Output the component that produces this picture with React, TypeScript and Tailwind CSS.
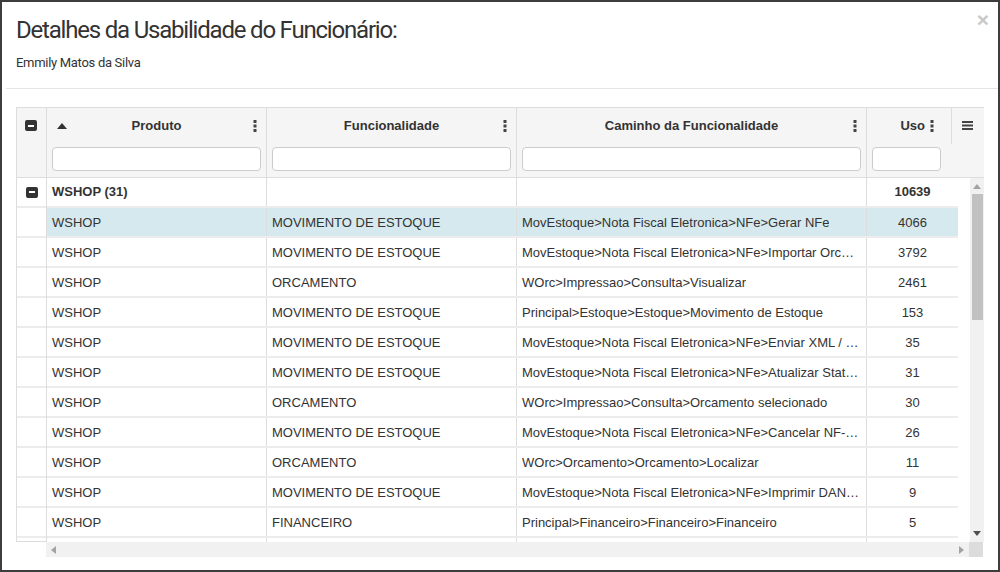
import React from "react";

const rows = [
  { p: "WSHOP", f: "MOVIMENTO DE ESTOQUE", c: "MovEstoque>Nota Fiscal Eletronica>NFe>Gerar NFe", u: "4066", sel: true },
  { p: "WSHOP", f: "MOVIMENTO DE ESTOQUE", c: "MovEstoque>Nota Fiscal Eletronica>NFe>Importar Orcamento", u: "3792" },
  { p: "WSHOP", f: "ORCAMENTO", c: "WOrc>Impressao>Consulta>Visualizar", u: "2461" },
  { p: "WSHOP", f: "MOVIMENTO DE ESTOQUE", c: "Principal>Estoque>Estoque>Movimento de Estoque", u: "153" },
  { p: "WSHOP", f: "MOVIMENTO DE ESTOQUE", c: "MovEstoque>Nota Fiscal Eletronica>NFe>Enviar XML / DANFE", u: "35" },
  { p: "WSHOP", f: "MOVIMENTO DE ESTOQUE", c: "MovEstoque>Nota Fiscal Eletronica>NFe>Atualizar Status da NFe", u: "31" },
  { p: "WSHOP", f: "ORCAMENTO", c: "WOrc>Impressao>Consulta>Orcamento selecionado", u: "30" },
  { p: "WSHOP", f: "MOVIMENTO DE ESTOQUE", c: "MovEstoque>Nota Fiscal Eletronica>NFe>Cancelar NF-e / Inutilizar", u: "26" },
  { p: "WSHOP", f: "ORCAMENTO", c: "WOrc>Orcamento>Orcamento>Localizar", u: "11" },
  { p: "WSHOP", f: "MOVIMENTO DE ESTOQUE", c: "MovEstoque>Nota Fiscal Eletronica>NFe>Imprimir DANFE", u: "9" },
  { p: "WSHOP", f: "FINANCEIRO", c: "Principal>Financeiro>Financeiro>Financeiro", u: "5" },
  { p: "WSHOP", f: "FINANCEIRO", c: "Principal>Financeiro>Financeiro>Contas", u: "4" },
];

function Kebab() {
  return (
    <svg width="4" height="12" viewBox="0 0 4 12" className="shrink-0">
      <rect x="0.5" y="0" width="3" height="3" fill="#444" />
      <rect x="0.5" y="4.5" width="3" height="3" fill="#444" />
      <rect x="0.5" y="9" width="3" height="3" fill="#444" />
    </svg>
  );
}

function MinusBox() {
  return (
    <span className="flex h-[11px] w-[12px] items-center justify-center rounded-[2px] bg-[#333]">
      <span className="h-[2px] w-[6px] bg-white" />
    </span>
  );
}

function HeadCell({ label, w, sort }: { label: string; w: string; sort?: boolean }) {
  return (
    <div className={`${w} flex shrink-0 flex-col border-r border-[#dddddd]`}>
      <div className="grid h-[36px] grid-cols-[24px_1fr_24px] items-center px-[6px]">
        <span className="pl-[4px]">
          {sort && (
            <svg width="10" height="6" viewBox="0 0 10 6"><path d="M0 6 L5 0 L10 6 Z" fill="#333" /></svg>
          )}
        </span>
        <span className="text-center text-[13px] font-bold text-[#333]">{label}</span>
        <span className="flex justify-end pr-[3px]"><Kebab /></span>
      </div>
      <div className="h-[33px] px-[5px] pt-[3px]">
        <div className="h-[24px] rounded-[4px] border border-[#cccccc] bg-white" />
      </div>
    </div>
  );
}

export default function App() {
  return (
    <div className="flex h-[572px] w-[1000px] flex-col overflow-hidden border-2 border-[#3d3d3d] bg-white font-['Liberation_Sans',Arial,sans-serif]">
      <div className="flex items-start justify-between pl-[14px] pr-[9px] pt-[13px]">
        <h1 className="font-['Roboto',sans-serif] text-[24px] leading-[30px] font-normal tracking-[-1.2px] text-[#333]">
          Detalhes da Usabilidade do Funcionário:
        </h1>
        <span className="-mt-[5px] text-[21px] leading-[20px] font-bold text-[#c8c8c8]">×</span>
      </div>
      <div className="mt-[8px] pl-[14px] font-['Roboto',sans-serif] text-[13px] leading-[20px] tracking-[-0.3px] text-[#333]">
        Emmily Matos da Silva
      </div>
      <div className="ml-[4px] mt-[15px] h-px bg-[#e5e5e5]" />

      <div className="ml-[14px] mt-[18px] flex w-[968px] flex-col">
        {/* header */}
        <div className="flex h-[71px] border-l border-t border-b border-[#dddddd] bg-[#f5f5f5]">
          <div className="flex w-[30px] shrink-0 border-r border-[#dddddd] pl-[8px] pt-[12px]">
            <MinusBox />
          </div>
          <HeadCell label="Produto" w="w-[220px]" sort />
          <HeadCell label="Funcionalidade" w="w-[250px]" />
          <HeadCell label="Caminho da Funcionalidade" w="w-[350px]" />
          <div className="flex w-[85px] shrink-0 flex-col">
            <div className="flex h-[36px] items-center justify-end gap-[5px] border-r border-[#dddddd] pr-[17px]">
              <span className="text-[13px] font-bold text-[#333]">Uso</span>
              <Kebab />
            </div>
            <div className="h-[33px] pl-[5px] pr-[11px] pt-[3px]">
              <div className="h-[24px] rounded-[4px] border border-[#cccccc] bg-white" />
            </div>
          </div>
          <div className="flex w-[32px] shrink-0 justify-start pl-[10px] pt-[13px]">
            <svg width="11" height="9" viewBox="0 0 11 9">
              <rect x="0" y="0" width="11" height="2" fill="#444" />
              <rect x="0" y="3.5" width="11" height="2" fill="#444" />
              <rect x="0" y="7" width="11" height="2" fill="#444" />
            </svg>
          </div>
        </div>

        {/* body */}
        <div className="flex h-[364px] border-l border-[#dddddd]">
          <div className="flex w-[30px] shrink-0 flex-col overflow-hidden border-r border-b border-[#dddddd]">
            <div className="flex h-[30px] shrink-0 items-center justify-center border-b-2 border-[#ececec]">
              <MinusBox />
            </div>
            {rows.map((r, i) => (
              <div key={i} className="h-[30px] shrink-0 border-b-2 border-[#ececec]" />
            ))}
          </div>
          <div className="flex w-[911px] shrink-0 flex-col overflow-hidden text-[13px] text-[#333]">
            <div className="flex h-[30px] shrink-0 items-center border-b-2 border-[#ececec] font-bold">
              <div className="flex h-full w-[220px] shrink-0 items-center border-r border-[#dddddd] pl-[5px]">WSHOP (31)</div>
              <div className="h-full w-[250px] shrink-0 border-r border-[#dddddd]" />
              <div className="h-full w-[350px] shrink-0 border-r border-[#dddddd]" />
              <div className="flex h-full w-[91px] shrink-0 items-center justify-center">10639</div>
            </div>
            {rows.map((r, i) => (
              <div
                key={i}
                className={`flex h-[30px] shrink-0 border-b-2 border-[#ececec] ${r.sel ? "bg-[#d5e9ee]" : ""}`}
              >
                <div className="flex h-full w-[220px] shrink-0 items-center border-r border-[#dddddd] pl-[5px] pt-[2px]">{r.p}</div>
                <div className="flex h-full w-[250px] shrink-0 items-center border-r border-[#dddddd] pl-[5px] pt-[2px]">{r.f}</div>
                <div className="flex h-full w-[350px] shrink-0 items-center border-r border-[#dddddd] pl-[5px] pr-[5px] pt-[2px]">
                  <span className="truncate">{r.c}</span>
                </div>
                <div className="flex h-full w-[91px] shrink-0 items-center justify-center pt-[2px]">{r.u}</div>
              </div>
            ))}
          </div>
          <div className="w-[12px] shrink-0" />
          <div className="flex w-[14px] shrink-0 flex-col items-center bg-[#f1f1f1]">
            <svg width="8" height="5" viewBox="0 0 8 5" className="mt-[6px]"><path d="M0 5 L4 0 L8 5 Z" fill="#a3a3a3" /></svg>
            <div className="mt-[5px] h-[126px] w-[11px] bg-[#c1c1c1]" />
            <div className="flex-1" />
            <svg width="8" height="5" viewBox="0 0 8 5" className="mb-[6px]"><path d="M0 0 L8 0 L4 5 Z" fill="#505050" /></svg>
          </div>
        </div>

        {/* horizontal scrollbar */}
        <div className="flex h-[15px]">
          <div className="w-[30px] shrink-0" />
          <div className="flex w-[923px] shrink-0 items-center justify-between bg-[#f1f1f1] px-[5px]">
            <svg width="5" height="8" viewBox="0 0 5 8"><path d="M5 0 L0 4 L5 8 Z" fill="#a3a3a3" /></svg>
            <svg width="5" height="8" viewBox="0 0 5 8"><path d="M0 0 L5 4 L0 8 Z" fill="#a3a3a3" /></svg>
          </div>
          <div className="w-[14px] shrink-0 bg-[#dcdcdc]" />
        </div>
      </div>
    </div>
  );
}
